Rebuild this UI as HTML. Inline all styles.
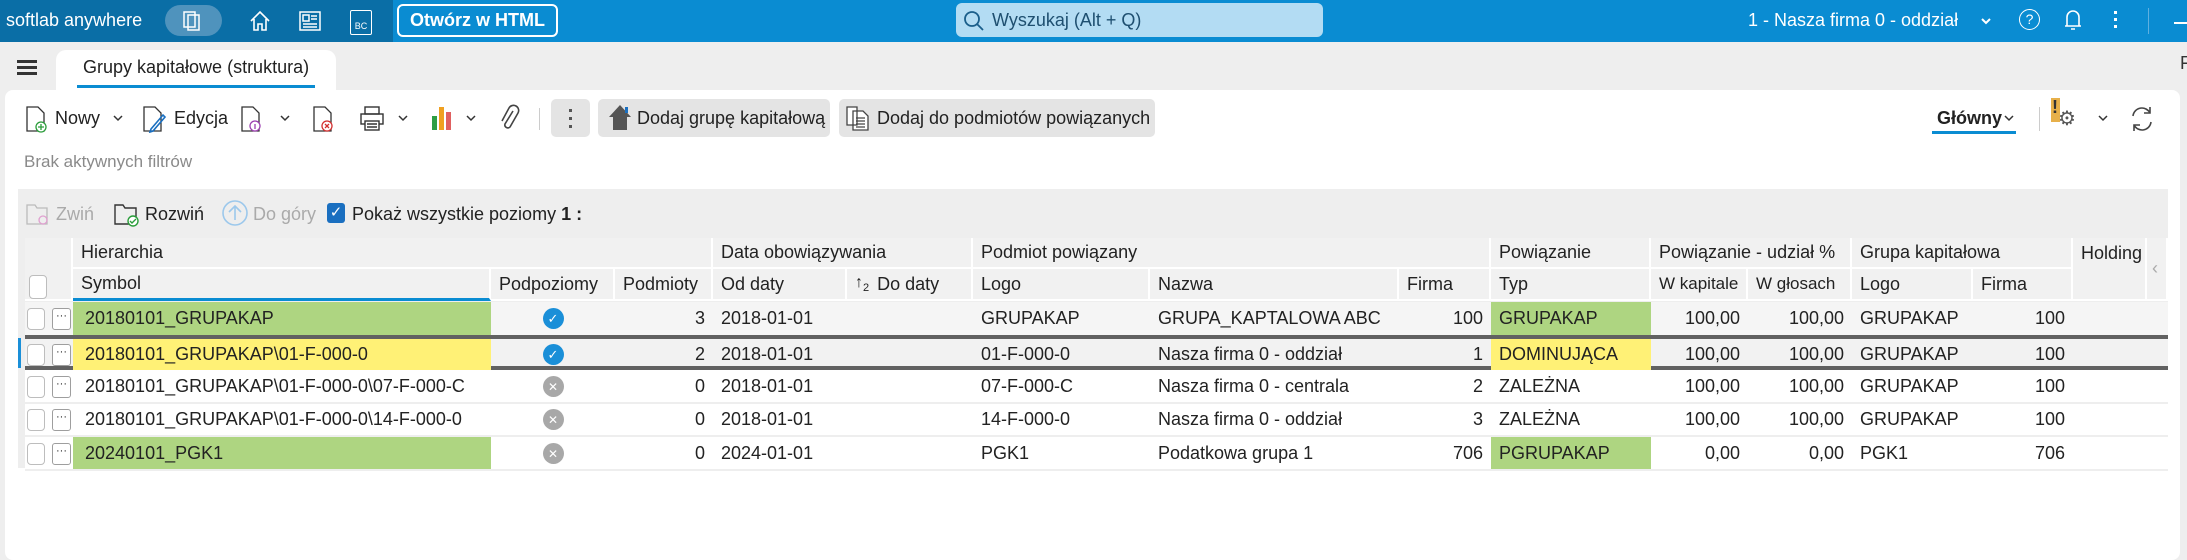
<!DOCTYPE html>
<html><head><meta charset="utf-8">
<style>
*{box-sizing:border-box;margin:0;padding:0}
body{width:2187px;height:548px;overflow:hidden;background:#eeeeee;font-family:"Liberation Sans",Arial,sans-serif;color:#222;position:relative}
.a{position:absolute}
.top{left:0;top:0;width:2187px;height:42px;background:#0a8cd2}
.topd{left:0;top:0;width:393px;height:42px;background:#0a6ea6}
.wt{color:#fff}
.btn{background:#e4e4e4;border-radius:5px}
.row{position:absolute;left:25px;width:2143px;height:33px;display:flex;font-size:18px;align-items:stretch}
.row>div{display:flex;align-items:center;padding:0 8px;white-space:nowrap;overflow:hidden}
.r{justify-content:flex-end}
.c{justify-content:center}
.hd{position:absolute;background:#f1f1f1;font-size:18px;display:flex;align-items:center;padding-left:8px;border-right:2px solid #fff;border-bottom:2px solid #fff;white-space:nowrap;color:#222}
.cb{width:18px;height:22px;border:1.5px solid #bdbdbd;border-radius:4px;background:#fff;margin-left:2px}
.dots{width:19px;height:22px;border:1.5px solid #9e9e9e;border-radius:3px;margin-left:7px;font-size:11px;line-height:14px;text-align:center;background:#fff}
.ok{width:21px;height:21px;border-radius:50%;background:#1a8fd8;color:#fff;font-size:13px;display:flex;align-items:center;justify-content:center}
.no{width:21px;height:21px;border-radius:50%;background:#a8a8a8;color:#fff;font-size:12px;display:flex;align-items:center;justify-content:center}
</style></head><body>
<div class="a top"></div><div class="a topd"></div>
<div class="a wt" style="left:6px;top:10px;font-size:18px">softlab anywhere</div>
<div class="a" style="left:165px;top:5px;width:57px;height:31px;border-radius:16px;background:#4f93bd"></div>
<svg class="a" style="left:180px;top:8px" width="26" height="26" viewBox="0 0 26 26" fill="none" stroke="#fff" stroke-width="1.5"><rect x="4" y="4" width="11" height="15"/><rect x="8" y="7" width="11" height="15"/></svg>
<svg class="a" style="left:248px;top:9px" width="24" height="24" viewBox="0 0 24 24" fill="none" stroke="#fff" stroke-width="1.6"><path d="M3 12 L12 3 L21 12 M6 10 V21 H10 V15 H14 V21 H18 V10"/></svg>
<svg class="a" style="left:298px;top:10px" width="24" height="22" viewBox="0 0 24 22" fill="none" stroke="#fff" stroke-width="1.5"><rect x="2" y="2" width="20" height="18"/><rect x="5" y="5" width="6" height="6"/><path d="M13 6h6M13 9h6M5 14h14M5 17h14"/></svg>
<div class="a" style="left:350px;top:10px;width:22px;height:25px;border:1.5px solid #fff;border-radius:2px;color:#fff;font-size:9px;text-align:center;line-height:30px">BC</div>
<div class="a wt" style="left:397px;top:4px;width:161px;height:33px;border:2px solid #fff;border-radius:6px;font-size:18px;font-weight:bold;text-align:center;line-height:29px">Otwórz w HTML</div>
<div class="a" style="left:956px;top:3px;width:367px;height:34px;background:#b3dcf3;border-radius:6px"></div>
<svg class="a" style="left:962px;top:9px" width="24" height="24" viewBox="0 0 24 24" fill="none" stroke="#1a5e8a" stroke-width="1.8"><circle cx="10" cy="10" r="7"/><path d="M15 15l6 6"/></svg>
<div class="a" style="left:992px;top:10px;font-size:18px;color:#1e4f70">Wyszukaj (Alt + Q)</div>
<div class="a wt" style="left:1748px;top:10px;font-size:18px">1 - Nasza firma 0 - oddział</div>
<svg class="a" style="left:1980px;top:16px" width="12" height="10" viewBox="0 0 12 10" fill="none" stroke="#fff" stroke-width="2"><path d="M2 3l4 4 4-4"/></svg>
<div class="a" style="left:2019px;top:9px;width:21px;height:21px;border:1.6px solid #fff;border-radius:50%;color:#fff;font-size:14px;text-align:center;line-height:18px">?</div>
<svg class="a" style="left:2062px;top:7px" width="22" height="26" viewBox="0 0 22 26" fill="none" stroke="#fff" stroke-width="1.6"><path d="M5 19V10a6 6 0 0 1 12 0v9zM3 19h16M9 22h4"/></svg>
<div class="a" style="left:2114px;top:11px;width:3px;height:3px;background:#fff;box-shadow:0 7px 0 #fff,0 14px 0 #fff"></div>
<div class="a" style="left:2148px;top:8px;width:1px;height:26px;background:#5fb0e0"></div>
<div class="a" style="left:2174px;top:22px;width:13px;height:2px;background:#fff"></div>

<div class="a" style="left:17px;top:60px;width:20px;height:3px;background:#333;box-shadow:0 6px 0 #333,0 12px 0 #333"></div>
<div class="a" style="left:56px;top:50px;width:280px;height:44px;background:#fff;border-radius:10px 10px 0 0"></div>
<div class="a" style="left:83px;top:57px;font-size:18px">Grupy kapitałowe (struktura)</div>
<div class="a" style="left:77px;top:85px;width:238px;height:3px;background:#0a8cd2"></div>
<div class="a" style="left:2180px;top:53px;font-size:18px;color:#333">F</div>

<div class="a" style="left:5px;top:90px;width:2175px;height:470px;background:#fff;border-radius:8px"></div>
<!-- toolbar -->
<svg class="a" style="left:25px;top:105px" width="24" height="28" viewBox="0 0 24 28" fill="none" stroke="#333" stroke-width="1.3"><path d="M2 2h11l6 6v18H2z"/><circle cx="16" cy="22" r="5" fill="#fff" stroke="#2a9d3a"/><path d="M16 19v6M13 22h6" stroke="#2a9d3a"/></svg>
<div class="a" style="left:55px;top:108px;font-size:18px">Nowy</div>
<svg class="a" style="left:112px;top:113px" width="12" height="10" viewBox="0 0 12 10" fill="none" stroke="#333" stroke-width="1.5"><path d="M2 3l4 4 4-4"/></svg>
<svg class="a" style="left:142px;top:105px" width="26" height="28" viewBox="0 0 26 28" fill="none" stroke="#333" stroke-width="1.3"><path d="M2 2h11l6 6v18H2z"/><path d="M9 24l12-14 2 2-12 14-3 1z" stroke="#1a6fc0" stroke-width="1.6"/></svg>
<div class="a" style="left:174px;top:108px;font-size:18px">Edycja</div>
<svg class="a" style="left:240px;top:105px" width="24" height="28" viewBox="0 0 24 28" fill="none" stroke="#333" stroke-width="1.3"><path d="M2 2h11l6 6v18H2z"/><circle cx="15" cy="21" r="5" fill="#fff" stroke="#9c3fb0"/><path d="M15 19v5" stroke="#9c3fb0"/></svg>
<svg class="a" style="left:279px;top:113px" width="12" height="10" viewBox="0 0 12 10" fill="none" stroke="#333" stroke-width="1.5"><path d="M2 3l4 4 4-4"/></svg>
<svg class="a" style="left:312px;top:105px" width="24" height="28" viewBox="0 0 24 28" fill="none" stroke="#333" stroke-width="1.3"><path d="M2 2h11l6 6v18H2z"/><circle cx="15" cy="21" r="5" fill="#fff" stroke="#d32f2f"/><path d="M13 19l4 4M17 19l-4 4" stroke="#d32f2f"/></svg>
<svg class="a" style="left:359px;top:105px" width="26" height="28" viewBox="0 0 26 28" fill="none" stroke="#333" stroke-width="1.4"><rect x="6" y="2" width="14" height="7"/><rect x="2" y="9" width="22" height="10"/><rect x="6" y="16" width="14" height="9" fill="#fff"/><path d="M8 19h10M8 22h10"/></svg>
<svg class="a" style="left:397px;top:113px" width="12" height="10" viewBox="0 0 12 10" fill="none" stroke="#333" stroke-width="1.5"><path d="M2 3l4 4 4-4"/></svg>
<svg class="a" style="left:430px;top:104px" width="26" height="28" viewBox="0 0 26 28"><rect x="2" y="12" width="5" height="14" fill="#2e9e44"/><rect x="9" y="3" width="5" height="23" fill="#f0a020"/><rect x="16" y="8" width="5" height="18" fill="#e06060"/></svg>
<svg class="a" style="left:465px;top:113px" width="12" height="10" viewBox="0 0 12 10" fill="none" stroke="#333" stroke-width="1.5"><path d="M2 3l4 4 4-4"/></svg>
<svg class="a" style="left:500px;top:104px" width="20" height="30" viewBox="0 0 20 30" fill="none" stroke="#444" stroke-width="1.6"><path d="M13 7L5 20a3 3 0 0 0 5 3l8-14a5 5 0 0 0-9-5L2 17"/></svg>
<div class="a" style="left:539px;top:108px;width:1px;height:22px;background:#ccc"></div>
<div class="a btn" style="left:551px;top:99px;width:39px;height:38px"></div>
<div class="a" style="left:569px;top:109px;width:3px;height:3px;background:#555;box-shadow:0 8px 0 #555,0 16px 0 #555"></div>
<div class="a btn" style="left:598px;top:99px;width:232px;height:38px"></div>
<svg class="a" style="left:605px;top:103px" width="30" height="30" viewBox="0 0 30 30"><path d="M15 2L4 14h4v13h14V14h4z" fill="#555"/><rect x="20" y="4" width="3" height="6" fill="#1a6fc0"/></svg>
<div class="a" style="left:637px;top:108px;font-size:18px">Dodaj grupę kapitałową</div>
<div class="a btn" style="left:839px;top:99px;width:316px;height:38px"></div>
<svg class="a" style="left:845px;top:104px" width="28" height="28" viewBox="0 0 28 28" fill="none" stroke="#444" stroke-width="1.3"><path d="M2 3h10v18H2zM8 7h10l5 5v14H8z" fill="#fff"/><path d="M11 14h9M11 17h9M11 20h9M11 23h9"/></svg>
<div class="a" style="left:877px;top:108px;font-size:18px">Dodaj do podmiotów powiązanych</div>
<div class="a" style="left:1937px;top:108px;font-size:18px;font-weight:bold">Główny</div>
<svg class="a" style="left:2003px;top:113px" width="12" height="10" viewBox="0 0 12 10" fill="none" stroke="#333" stroke-width="1.5"><path d="M2 3l4 4 4-4"/></svg>
<div class="a" style="left:1932px;top:131px;width:84px;height:3px;background:#0a8cd2"></div>
<div class="a" style="left:2039px;top:107px;width:1px;height:24px;background:#ccc"></div>
<div class="a" style="left:2051px;top:98px;width:9px;height:24px;background:#e7b04a"></div>
<div class="a" style="left:2052px;top:97px;font-size:18px;font-weight:bold;color:#333">!</div>
<div class="a" style="left:2058px;top:106px;font-size:20px;color:#555">⚙</div>
<svg class="a" style="left:2097px;top:113px" width="12" height="10" viewBox="0 0 12 10" fill="none" stroke="#333" stroke-width="1.5"><path d="M2 3l4 4 4-4"/></svg>
<svg class="a" style="left:2128px;top:104px" width="28" height="30" viewBox="0 0 28 30" fill="none" stroke="#444" stroke-width="1.6"><path d="M5 12a9 9 0 0 1 17-3M23 18a9 9 0 0 1-17 3M22 3v6h-6M6 27v-6h6"/></svg>
<div class="a" style="left:24px;top:152px;font-size:17px;color:#8a8a8a">Brak aktywnych filtrów</div>

<!-- gray area -->
<div class="a" style="left:18px;top:189px;width:2150px;height:279px;background:#eeeeee"></div>
<svg class="a" style="left:25px;top:200px" width="26" height="26" viewBox="0 0 26 26" fill="none" stroke="#bbb" stroke-width="1.3"><path d="M2 5h8l2 3h10v16H2z"/><circle cx="18" cy="20" r="4" stroke="#e0a0d0"/></svg>
<div class="a" style="left:56px;top:204px;font-size:18px;color:#aaa">Zwiń</div>
<svg class="a" style="left:113px;top:200px" width="28" height="28" viewBox="0 0 28 28" fill="none" stroke="#333" stroke-width="1.4"><path d="M2 5h8l2 3h11v16H2z"/><circle cx="20" cy="21" r="5" fill="#fff" stroke="#2a9d3a"/><path d="M17 21l2 2 4-4" stroke="#2a9d3a"/></svg>
<div class="a" style="left:145px;top:204px;font-size:18px">Rozwiń</div>
<svg class="a" style="left:221px;top:199px" width="28" height="28" viewBox="0 0 28 28" fill="none" stroke="#9cc8ec" stroke-width="1.6"><circle cx="14" cy="14" r="12"/><path d="M14 21V7M8 13l6-6 6 6"/></svg>
<div class="a" style="left:253px;top:204px;font-size:18px;color:#aaa">Do góry</div>
<div class="a" style="left:327px;top:203px;width:18px;height:20px;background:#1a6fc0;border-radius:3px;color:#fff;font-size:15px;text-align:center;line-height:20px">✓</div>
<div class="a" style="left:352px;top:204px;font-size:18px">Pokaż wszystkie poziomy <b>1 :</b></div>

<!-- headers -->
<div class="hd" style="left:25px;top:238px;width:48px;height:63px"></div>
<div class="a cb" style="left:27px;top:275px;width:18px;height:24px"></div>
<div class="hd" style="left:73px;top:238px;width:640px;height:31px">Hierarchia</div>
<div class="hd" style="left:713px;top:238px;width:260px;height:31px">Data obowiązywania</div>
<div class="hd" style="left:973px;top:238px;width:518px;height:31px">Podmiot powiązany</div>
<div class="hd" style="left:1491px;top:238px;width:160px;height:31px">Powiązanie</div>
<div class="hd" style="left:1651px;top:238px;width:201px;height:31px">Powiązanie - udział %</div>
<div class="hd" style="left:1852px;top:238px;width:221px;height:31px">Grupa kapitałowa</div>
<div class="hd" style="left:2073px;top:238px;width:74px;height:63px;align-items:flex-start;padding-top:5px">Holding</div>
<div class="hd" style="left:2147px;top:238px;width:21px;height:63px;color:#aaa;padding-left:5px">&lsaquo;</div>
<div class="hd" style="left:73px;top:269px;width:418px;height:32px;border-bottom:3px solid #0a8cd2">Symbol</div>
<div class="hd" style="left:491px;top:269px;width:124px;height:32px">Podpoziomy</div>
<div class="hd" style="left:615px;top:269px;width:98px;height:32px">Podmioty</div>
<div class="hd" style="left:713px;top:269px;width:134px;height:32px">Od daty</div>
<div class="hd" style="left:847px;top:269px;width:126px;height:32px"><span style="font-size:16px;margin-right:8px">↑<sub style="font-size:11px">2</sub></span>Do daty</div>
<div class="hd" style="left:973px;top:269px;width:177px;height:32px">Logo</div>
<div class="hd" style="left:1150px;top:269px;width:249px;height:32px">Nazwa</div>
<div class="hd" style="left:1399px;top:269px;width:92px;height:32px">Firma</div>
<div class="hd" style="left:1491px;top:269px;width:160px;height:32px">Typ</div>
<div class="hd" style="left:1651px;top:269px;width:97px;height:32px;font-size:17px">W kapitale</div>
<div class="hd" style="left:1748px;top:269px;width:104px;height:32px;font-size:17px">W głosach</div>
<div class="hd" style="left:1852px;top:269px;width:121px;height:32px">Logo</div>
<div class="hd" style="left:1973px;top:269px;width:100px;height:32px">Firma</div>

<!-- rows background -->
<div class="a" style="left:25px;top:302px;width:2143px;height:166px;background:#fff"></div>
<div class="a" style="left:25px;top:302px;width:2143px;height:33px;background:#f5f5f5"></div>
<div class="a" style="left:25px;top:335px;width:2143px;height:35px;background:#f2f2f2;border-top:4px solid #616161;border-bottom:4px solid #616161"></div>
<div class="a" style="left:18px;top:338px;width:3px;height:30px;background:#1a8fd8"></div>
<div class="a" style="left:25px;top:402px;width:2143px;height:2px;background:#eeeeee"></div>
<div class="a" style="left:25px;top:435px;width:2143px;height:2px;background:#eeeeee"></div>

<div class="row" style="top:302px">
<div style="width:48px;padding:0"><div class="cb"></div><div class="dots">···</div></div>
<div style="width:418px;background:#aed581;padding-left:12px">20180101_GRUPAKAP</div>
<div class="c" style="width:124px"><div class="ok">✓</div></div>
<div class="r" style="width:98px">3</div><div style="width:134px">2018-01-01</div><div style="width:126px"></div>
<div style="width:177px">GRUPAKAP</div><div style="width:249px">GRUPA_KAPTALOWA ABC</div><div class="r" style="width:92px">100</div>
<div style="width:160px;background:#aed581">GRUPAKAP</div>
<div class="r" style="width:97px">100,00</div><div class="r" style="width:104px">100,00</div><div style="width:121px">GRUPAKAP</div><div class="r" style="width:100px">100</div>
</div>
<div class="row" style="top:336px;height:31px;margin-top:3px">
<div style="width:48px;padding:0"><div class="cb"></div><div class="dots">···</div></div>
<div style="width:418px;background:#fff176;padding-left:12px">20180101_GRUPAKAP\01-F-000-0</div>
<div class="c" style="width:124px"><div class="ok">✓</div></div>
<div class="r" style="width:98px">2</div><div style="width:134px">2018-01-01</div><div style="width:126px"></div>
<div style="width:177px">01-F-000-0</div><div style="width:249px">Nasza firma 0 - oddział</div><div class="r" style="width:92px">1</div>
<div style="width:160px;background:#fff176">DOMINUJĄCA</div>
<div class="r" style="width:97px">100,00</div><div class="r" style="width:104px">100,00</div><div style="width:121px">GRUPAKAP</div><div class="r" style="width:100px">100</div>
</div>
<div class="row" style="top:370px">
<div style="width:48px;padding:0"><div class="cb"></div><div class="dots">···</div></div>
<div style="width:418px;padding-left:12px">20180101_GRUPAKAP\01-F-000-0\07-F-000-C</div>
<div class="c" style="width:124px"><div class="no">✕</div></div>
<div class="r" style="width:98px">0</div><div style="width:134px">2018-01-01</div><div style="width:126px"></div>
<div style="width:177px">07-F-000-C</div><div style="width:249px">Nasza firma 0 - centrala</div><div class="r" style="width:92px">2</div>
<div style="width:160px">ZALEŻNA</div>
<div class="r" style="width:97px">100,00</div><div class="r" style="width:104px">100,00</div><div style="width:121px">GRUPAKAP</div><div class="r" style="width:100px">100</div>
</div>
<div class="row" style="top:403px">
<div style="width:48px;padding:0"><div class="cb"></div><div class="dots">···</div></div>
<div style="width:418px;padding-left:12px">20180101_GRUPAKAP\01-F-000-0\14-F-000-0</div>
<div class="c" style="width:124px"><div class="no">✕</div></div>
<div class="r" style="width:98px">0</div><div style="width:134px">2018-01-01</div><div style="width:126px"></div>
<div style="width:177px">14-F-000-0</div><div style="width:249px">Nasza firma 0 - oddział</div><div class="r" style="width:92px">3</div>
<div style="width:160px">ZALEŻNA</div>
<div class="r" style="width:97px">100,00</div><div class="r" style="width:104px">100,00</div><div style="width:121px">GRUPAKAP</div><div class="r" style="width:100px">100</div>
</div>
<div class="row" style="top:437px">
<div style="width:48px;padding:0"><div class="cb"></div><div class="dots">···</div></div>
<div style="width:418px;background:#aed581;padding-left:12px">20240101_PGK1</div>
<div class="c" style="width:124px"><div class="no">✕</div></div>
<div class="r" style="width:98px">0</div><div style="width:134px">2024-01-01</div><div style="width:126px"></div>
<div style="width:177px">PGK1</div><div style="width:249px">Podatkowa grupa 1</div><div class="r" style="width:92px">706</div>
<div style="width:160px;background:#aed581">PGRUPAKAP</div>
<div class="r" style="width:97px">0,00</div><div class="r" style="width:104px">0,00</div><div style="width:121px">PGK1</div><div class="r" style="width:100px">706</div>
</div>
<div class="a" style="left:25px;top:469px;width:2143px;height:2px;background:#eeeeee"></div>
</body></html>
